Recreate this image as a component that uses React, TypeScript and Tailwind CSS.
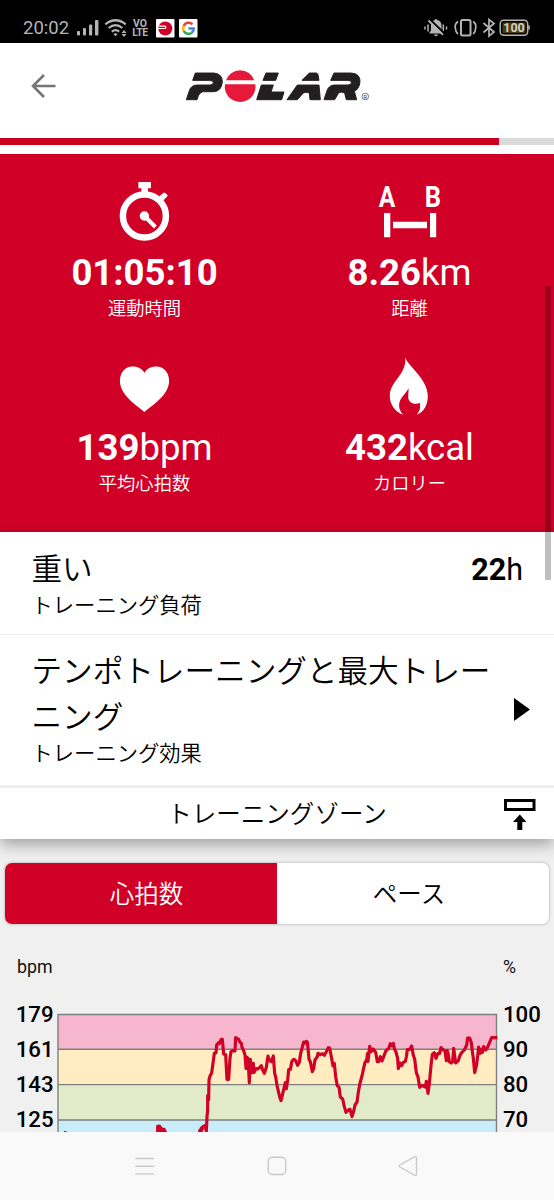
import type { ReactNode } from "react";

const JP = "font-['Noto_Sans_CJK_JP',sans-serif] font-[350]";

function StatusBar() {
  return (
    <div className="flex h-[43px] shrink-0 items-start justify-between bg-black pl-[23px] pr-[24px] pt-[18px] text-[#b4b4b4]">
      <div className="flex h-5 items-center">
        <span className="w-[53.500px] text-[18.500px] leading-5">20:02</span>
        <svg className="mr-[5.500px]" width="22" height="20" viewBox="77 18 22 20" fill="currentColor">
          <rect x="77" y="31" width="3" height="4.5" rx="1" />
          <rect x="83" y="28" width="3" height="7.5" rx="1" />
          <rect x="89" y="24.5" width="3.2" height="11" rx="1" />
          <rect x="95" y="20" width="3.4" height="15.5" rx="1" />
        </svg>
        <svg className="mr-[4px]" width="23" height="20" viewBox="104 18 23 20" fill="none" stroke="currentColor" strokeWidth="2.2">
          <path d="M105.3 24.3Q115.5 16.2 125.7 24.3" />
          <path d="M108.6 28Q115.5 22.3 122.4 28" />
          <path d="M111.8 31.6Q115.5 28.6 119.2 31.6" />
          <path d="M113.4 34L115.5 36.3L117.6 34Q115.5 32.5 113.4 34Z" fill="currentColor" stroke="none" />
          <path d="M121.5 33L124 30L126.5 33ZM121.5 34L124 37L126.5 34Z" fill="currentColor" stroke="none" />
        </svg>
        <span className="flex w-[18px] flex-col items-center text-[10.400px] font-bold leading-[9px]">
          <span>VO</span>
          <span className="tracking-[-0.400px]">LTE</span>
        </span>
        <svg className="ml-[7px]" width="19" height="19" viewBox="0 0 19 19">
          <rect width="18.500" height="18.500" rx="1" fill="#fff" />
          <circle cx="9.300" cy="9.500" r="7" fill="#d10027" />
          <path d="M1.500 9.500H9Q10.700 8.300 9 7.200H3" fill="none" stroke="#fff" strokeWidth="1.200" />
        </svg>
        <svg className="ml-[4px]" width="19" height="19" viewBox="0 0 19 19">
          <rect width="18.500" height="18.500" rx="1" fill="#fff" />
          <g fill="none" strokeWidth="2.600">
            <path d="M13.500 5.300A5.400 5.400 0 0 0 4.700 7" stroke="#ea4335" />
            <path d="M4.700 7A5.400 5.400 0 0 0 4.700 12" stroke="#fbbc05" />
            <path d="M4.700 12A5.400 5.400 0 0 0 12.800 13.700" stroke="#34a853" />
            <path d="M12.800 13.700A5.400 5.400 0 0 0 14.700 9.500H9.500" stroke="#4285f4" />
          </g>
        </svg>
      </div>
      <div className="flex h-5 items-center">
        <svg width="106" height="20" viewBox="425 18 106 20" fill="none" stroke="currentColor" strokeWidth="1.500">
          <path d="M426 26.500V29.500M429 24.500V31.500M444.300 24.500V31.500M447.500 26.500V29.500" />
          <path d="M430.500 32.500L432 30.500V26Q432 21 435.500 20.300Q437 17.800 438.500 20.300Q442.500 21 442.500 26V30.500L443.500 32.500V33.500H430.500ZM435 34.500H439Q438.700 36.300 437 36.300Q435.300 36.300 435 34.500Z" fill="currentColor" stroke="none" />
          <path d="M431 19.500L445.500 33.500" stroke="#000" strokeWidth="2" />
          <path d="M429.500 20.500L444 34.800" strokeWidth="1.800" />
          <rect x="462" y="20" width="9.500" height="15.500" rx="1.500" strokeWidth="2" />
          <path d="M459 21.500Q455.500 24 456.300 28Q456.500 32 459 34M474.200 21.500Q477.500 24 476.700 28Q476.500 32 474.200 34" strokeWidth="1.700" />
          <path d="M484.500 23L495 32L490 36V19.500L495 23.500L484.500 32.500" strokeWidth="1.700" />
          <rect x="501.200" y="20.200" width="27.500" height="15" rx="3.500" />
          <rect x="503.500" y="22.500" width="23" height="10.500" rx="1" fill="#4a3c00" stroke="none" />
          <path d="M530 25.500V29.500" strokeWidth="1.600" />
          <text x="515" y="32.200" textAnchor="middle" fontSize="12.500" fontWeight="700" fill="#d0d0d0" stroke="none">100</text>
        </svg>
      </div>
    </div>
  );
}

function Header() {
  return (
    <header className="flex h-[95px] shrink-0 items-start pl-[30px] pt-[27px]">
      <svg className="mt-[2px]" width="27" height="28" viewBox="30 72 27 28" fill="none" stroke="#757575" strokeWidth="2.600">
        <path d="M55.500 86H33M44 75L33 86L44 97" />
      </svg>
      <svg className="ml-[127px]" width="188" height="33" viewBox="184 70 188 33">
        <g transform="translate(0 .7) scale(.33333)" fill="#231f20" stroke="#231f20" strokeWidth="3" strokeLinejoin="round">
          <path d="M586 217H642Q668 220 667 244Q664 273 640 273H608Q599 276 595 285L591 297H559L568 270Q573 253 592 253H628Q640 253 640 246Q640 239 628 239H578Z" />
          <path d="M798 217H835L827 239H789ZM784 253H820L813 274H852L845 297H770Z" />
          <path d="M928 217H948Q953 217 954 222L957 239H906ZM892 253H957L961 297H930L928 277Q918 272 910 277L892 297H861Z" />
          <path d="M1002 217H1054Q1081 219 1080 243Q1078 265 1063 272L1070 297H1039L1034 277Q1026 272 1016 276L1004 297H972L981 270Q987 253 1004 253H1044Q1054 252 1054 246Q1054 239 1044 239H992Z" />
          <g fill="#e71939" stroke="none">
            <path d="M678 239A45 45 0 0 1 763 239Z" />
            <path d="M675 251H766A46 46 0 1 1 675 251Z" />
          </g>
        </g>
        <circle cx="365.300" cy="96.500" r="3.300" fill="none" stroke="#444" strokeWidth=".7" />
        <text x="365.300" y="98.600" textAnchor="middle" fontSize="5.500" fill="#333">R</text>
      </svg>
    </header>
  );
}

function Metric({ icon, value, unit, label }: { icon: ReactNode; value: string; unit?: string; label: string }) {
  return (
    <div className="flex h-[175px] flex-col items-center text-white">
      <svg className="overflow-visible" width="64" height="60" viewBox="0 0 64 60" fill="#fff">{icon}</svg>
      <div className="mt-2 text-[36.500px] leading-[45px]">
        <span className="font-bold">{value}</span>{unit}
      </div>
      <div className={`${JP} text-[18.300px] leading-6`}>{label}</div>
    </div>
  );
}

function Metrics() {
  return (
    <section className="grid h-[378px] shrink-0 grid-cols-2 content-start bg-[#d10027] px-3 pt-7">
      <Metric
        value="01:05:10"
        label="運動時間"
        icon={
          <g transform="translate(-.6 0)">
            <circle cx="32" cy="34" r="21.500" fill="none" stroke="#fff" strokeWidth="6.500" />
            <path d="M26 0H38.500V6.300H35.500V12H29V6.300H26ZM46 15L51.500 10.500L55 14L50.500 19Z" />
            <path d="M49 17L54 12" stroke="#fff" strokeWidth="4" />
            <circle cx="32" cy="34" r="4.700" />
            <path d="M32 34L43 45" stroke="#fff" strokeWidth="4" />
          </g>
        }
      />
      <Metric
        value="8.26"
        unit="km"
        label="距離"
        icon={
          <g transform="translate(-1 0)">
            <text x="10" y="25" textAnchor="middle" fontSize="30" fontWeight="700" transform="translate(10 0) scale(.82 1) translate(-10 0)">A</text>
            <text x="56" y="25" textAnchor="middle" fontSize="30" fontWeight="700" transform="translate(56 0) scale(.85 1) translate(-56 0)">B</text>
            <path d="M7 31H13.300V55.300H7ZM16 39.800H50V46.300H16ZM53 31H59.200V55.300H53Z" />
          </g>
        }
      />
      <Metric
        value="139"
        unit="bpm"
        label="平均心拍数"
        icon={<path transform="translate(-.6 0)" d="M32 55C25 49 7.500 38 7.500 24C7.500 15 13 9.500 20 9.500C26 9.500 30 12 32 16C34 12 38 9.500 44 9.500C51 9.500 56.700 15 56.700 24C56.700 38 39 49 32 55Z" />}
      />
      <Metric
        value="432"
        unit="kcal"
        label="カロリー"
        icon={<path transform="translate(-1.200 0)" d="M28.500 .500C31 9 51 22 51 39C51 48 47 55 40 57.700C43 54.500 44 50 43 46C38 48 32 46 31.500 41C31 37 32.300 34 31.500 31C30 37 22 40 22.300 49C22.500 52 24 56 26.500 57.700C18 55 13 47 13 39C13 24 30 18 28.500 .500Z" />}
      />
    </section>
  );
}

function TrainingRows() {
  return (
    <section className="relative z-10 shrink-0 bg-white text-black shadow-[0_5px_15px_rgba(0,0,0,0.35)]">
      <div className="flex h-[102px] justify-between pl-[31.500px] pr-[31px] pt-3">
        <div className={JP}>
          <div className="text-[30.600px] leading-[46px]">重い</div>
          <div className="text-[21.300px] leading-7">トレーニング負荷</div>
        </div>
        <div className="pt-[3px] text-[30.500px] leading-[45px]"><b>22</b>h</div>
      </div>
      <div className="flex h-[150.500px] justify-between border-t border-[#ebebeb] pl-[31.500px] pr-6 pt-3">
        <div className={`${JP} w-[465px]`}>
          <div className="text-[30.600px] leading-[45.500px]">テンポトレーニングと最大トレー<br />ニング</div>
          <div className="text-[21.300px] leading-7">トレーニング効果</div>
        </div>
        <svg className="mt-[50.500px]" width="16" height="23" viewBox="0 0 16 23"><path d="M0 0L16 11.500L0 23Z" /></svg>
      </div>
      <div className="grid h-[54px] grid-cols-[1fr_auto_1fr] items-center border-t-[3px] border-[#efefef] pr-[18px]">
        <div className={`${JP} col-start-2 translate-x-[9px] text-[24.500px] leading-8`}>トレーニングゾーン</div>
        <svg className="mt-[4px] justify-self-end" width="32" height="32" viewBox="0 0 32 32">
          <path d="M1.500 1.500H30V10.500H1.500Z" fill="none" stroke="#000" strokeWidth="3" />
          <path d="M15.800 15.500L22.500 23H18.300V31H13.300V23H9Z" />
        </svg>
      </div>
    </section>
  );
}

function Tabs() {
  return (
    <div className={`${JP} mx-[5px] mt-6 flex h-[61px] shrink-0 overflow-hidden rounded-[7px] bg-white text-[24.500px] leading-8 shadow-[0_0_2px_1px_rgba(0,0,0,0.16)]`}>
      <button className="w-1/2 bg-[#d10027] pl-[11px] text-white">心拍数</button>
      <button className="w-1/2 pr-[8px] text-black">ペース</button>
    </div>
  );
}

const BANDS = [
  { y: 1014, h: 35, color: "#f5b6ce" },
  { y: 1049, h: 35.4, color: "#ffecc0" },
  { y: 1084.4, h: 35.4, color: "#e1ebc9" },
  { y: 1119.8, h: 40, color: "#c8ecf8" },
];

const HEART_RATE =
  "598,399 600,390 606,388 609,380 614,378 617,384 619,395 621,350 623,330 623,287 626,300 627,240 630,228 635,219 639,190 643,160 648,158 650,135 655,129 658,131 661,123 664,118 667,118 669,140 671,162 677,164 679,202 681,238 686,238 690,175 693,155 697,152 705,153 707,113 712,116 716,118 720,127 724,130 726,142 731,152 735,165 738,205 741,172 744,175 748,248 751,178 755,218 760,190 762,218 768,206 774,207 780,201 784,197 788,210 793,220 799,202 804,168 808,180 814,185 820,168 824,220 827,230 831,256 836,278 839,290 843,302 847,286 852,264 856,248 859,266 863,240 866,209 871,208 876,183 882,178 887,182 893,196 898,187 902,160 906,145 911,126 915,129 919,124 922,126 925,155 927,178 931,185 937,215 941,206 945,180 952,170 954,160 961,164 967,161 973,166 979,155 985,143 989,144 993,165 999,198 1003,190 1007,230 1012,258 1017,261 1021,291 1028,297 1033,320 1038,337 1045,330 1050,328 1056,350 1062,330 1065,315 1071,306 1075,277 1080,249 1086,228 1090,209 1095,187 1100,180 1103,160 1104,184 1109,139 1114,155 1120,147 1127,157 1132,185 1136,185 1141,170 1146,183 1151,170 1157,154 1161,149 1166,146 1171,131 1175,137 1180,130 1183,146 1188,156 1193,175 1195,206 1200,189 1205,197 1210,187 1216,184 1219,171 1222,149 1229,148 1235,138 1240,166 1244,177 1249,218 1254,231 1259,262 1266,256 1270,258 1276,261 1279,244 1284,280 1288,251 1293,197 1297,163 1303,158 1308,175 1314,160 1319,160 1323,143 1329,149 1335,153 1339,182 1342,152 1345,163 1348,185 1354,189 1358,185 1361,145 1367,189 1375,182 1380,166 1385,158 1393,150 1400,135 1403,114 1409,114 1414,128 1417,154 1420,175 1424,218 1430,194 1436,141 1440,160 1443,148 1447,157 1451,140 1457,150 1463,141 1468,129 1475,113 1492,113";

function Chart() {
  return (
    <section className="flex min-h-0 flex-1 flex-col overflow-hidden text-black">
      <div className="mt-[31px] flex h-6 shrink-0 justify-between pl-[17px] pr-[38px] text-[17.800px] leading-6 text-[#111]">
        <span>bpm</span><span>%</span>
      </div>
      <div className="mt-[19px] flex h-[160px] shrink-0 text-[22.200px] font-medium leading-[35.300px]">
        <div className="-mt-px w-[53.500px] text-right">
          {[179, 161, 143, 125].map((n) => <div key={n}>{n}</div>)}
        </div>
        <svg className="ml-[2.500px] mt-[9px] shrink-0" width="444" height="150" viewBox="56 1007 444 150">
          {BANDS.map((b) => <rect key={b.y} x="58" width="438.500" y={b.y} height={b.h} fill={b.color} />)}
          <path d="M58 1160V1014.500H496.500V1160M58 1049.300H496.500M58 1084.600H496.500M58 1120H496.500" fill="none" stroke="#808080" strokeWidth="1.400" />
          <g transform="translate(0 1000) scale(.33333)" fill="none" stroke="#d10027" strokeWidth="9.500" strokeLinejoin="round">
            <polyline points={HEART_RATE} />
            <path d="M192 398H199M473 410V379L478 378L485 387L492 388L498 400M604 400V384L618 375" />
            <path d="M475 382L492 400H475Z" fill="#d10027" />
          </g>
        </svg>
        <div className="-mt-px ml-[3px] w-12">
          {[100, 90, 80, 70].map((n) => <div key={n}>{n}</div>)}
        </div>
      </div>
    </section>
  );
}

function NavigationBar() {
  return (
    <nav className="flex h-[68px] shrink-0 items-center justify-between bg-[#f9f9f9] pl-[134px] pr-[134px]">
      <svg width="21" height="24" viewBox="0 0 21 24" fill="none" stroke="#c9c9c9" strokeWidth="1.400">
        <path d="M1.300 4.500H20M1.300 12.200H20M1.300 19.900H20" />
      </svg>
      <svg width="20" height="20" viewBox="0 0 20 20" fill="none" stroke="#c9c9c9" strokeWidth="1.400">
        <rect x="1.300" y="1.300" width="17.400" height="17.200" rx="4" />
      </svg>
      <svg width="22" height="22" viewBox="0 0 22 22" fill="none" stroke="#c9c9c9" strokeWidth="1.400" strokeLinejoin="round">
        <path d="M16.500 1.800Q18.500 .800 18.500 3V19Q18.500 21.200 16.500 20.200L1.800 12Q.200 11 1.800 10Z" />
      </svg>
    </nav>
  );
}

export default function App() {
  return (
    <main className="relative flex h-[1200px] w-[554px] flex-col overflow-hidden bg-[#f0f0f0] font-['Roboto',sans-serif]">
      <StatusBar />
      <div className="flex h-[111px] shrink-0 flex-col bg-white">
        <Header />
        <div className="h-[6.600px] bg-[#dadada]"><div className="h-full w-[498.500px] bg-[#ca0021]" /></div>
      </div>
      <Metrics />
      <TrainingRows />
      <Tabs />
      <Chart />
      <NavigationBar />
      <div className="absolute left-[545px] top-[286px] z-20 h-[294px] w-[6px] bg-black/25" />
    </main>
  );
}
